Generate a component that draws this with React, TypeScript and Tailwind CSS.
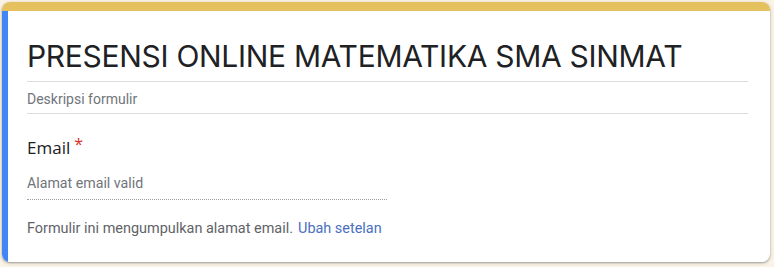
export default function App() {
  return (
    <div className="w-[774px] h-[267px] bg-[#fbf4e6] pt-[2px] pl-[2px] pr-[4px]">
      <div className="rounded-[8px] overflow-hidden bg-white shadow-[0_1px_2px_rgba(60,64,67,0.35),0_1px_3px_1px_rgba(60,64,67,0.15)]">
        <div className="h-[9px] bg-[#e4c15e]" />
        <div className="flex">
          <div className="w-[6px] bg-[#4285f4] rounded-bl-[8px]" />
          <div className="flex-1 pl-[19px] pr-[22px] pt-[21px] pb-[22px] font-['Roboto',sans-serif]">
            <div className="font-['Inter',sans-serif] text-[30px] leading-[48px] text-[#202124] tracking-[-0.3px]">
              PRESENSI ONLINE MATEMATIKA SMA SINMAT
            </div>
            <div className="h-px bg-[#dadce0] mt-[1px]" />
            <div className="pt-[3px] text-[14px] leading-[28px] text-[#70757a]">Deskripsi formulir</div>
            <div className="h-px bg-[#dadce0]" />
            <div className="mt-[22px] flex items-start text-[17px] leading-[24px] text-[#202124] font-['Open_Sans',sans-serif]">
              <span>Email</span>
              <span className="ml-[4px] text-[#d93025] text-[16px] leading-[16px]">*</span>
            </div>
            <div className="mt-[12px] w-[360px] border-b border-dotted border-[#9aa0a6] text-[14.2px] leading-[22px] text-[#70757a] pb-[5px]">
              Alamat email valid
            </div>
            <div className="mt-[18px] text-[14.45px] leading-[22px] text-[#5f6368]">
              Formulir ini mengumpulkan alamat email.
              <span className="ml-[5px] text-[#4a6fbf]">Ubah setelan</span>
            </div>
          </div>
        </div>
      </div>
    </div>
  );
}
